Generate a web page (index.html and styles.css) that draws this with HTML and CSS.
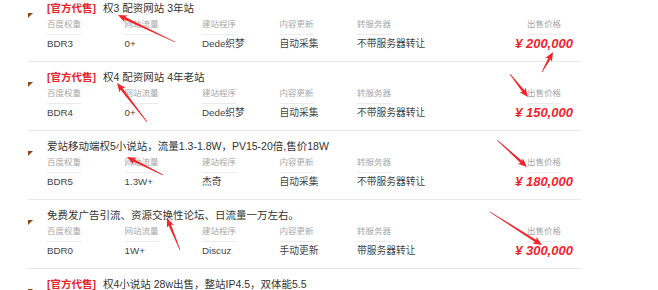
FILE: index.html
```html
<!DOCTYPE html>
<html lang="zh-CN">
<head>
<meta charset="utf-8">
<title>网站出售列表</title>
<link rel="stylesheet" href="styles.css">
</head>
<body>
<div class="page">
  <ul class="list">
    <li class="item">
      <div class="title"><span class="tag">[官方代售]</span>权3 配资网站 3年站</div>
      <div class="grid">
        <div class="cell"><span class="label">百度权重</span><span class="value">BDR3</span></div>
        <div class="cell"><span class="label">网站流量</span><span class="value">0+</span></div>
        <div class="cell"><span class="label">建站程序</span><span class="value">Dede织梦</span></div>
        <div class="cell"><span class="label">内容更新</span><span class="value">自动采集</span></div>
        <div class="cell"><span class="label">转服务器</span><span class="value">不带服务器转让</span></div>
        <div class="spacer"></div>
        <div class="cell price"><span class="label">出售价格</span><span class="money">¥ 200,000</span></div>
      </div>
    </li>
    <li class="item">
      <div class="title"><span class="tag">[官方代售]</span>权4 配资网站 4年老站</div>
      <div class="grid">
        <div class="cell"><span class="label">百度权重</span><span class="value">BDR4</span></div>
        <div class="cell"><span class="label">网站流量</span><span class="value">0+</span></div>
        <div class="cell"><span class="label">建站程序</span><span class="value">Dede织梦</span></div>
        <div class="cell"><span class="label">内容更新</span><span class="value">自动采集</span></div>
        <div class="cell"><span class="label">转服务器</span><span class="value">不带服务器转让</span></div>
        <div class="spacer"></div>
        <div class="cell price"><span class="label">出售价格</span><span class="money">¥ 150,000</span></div>
      </div>
    </li>
    <li class="item">
      <div class="title">爱站移动端权5小说站，流量1.3-1.8W，PV15-20倍,售价18W</div>
      <div class="grid">
        <div class="cell"><span class="label">百度权重</span><span class="value">BDR5</span></div>
        <div class="cell"><span class="label">网站流量</span><span class="value">1.3W+</span></div>
        <div class="cell"><span class="label">建站程序</span><span class="value">杰奇</span></div>
        <div class="cell"><span class="label">内容更新</span><span class="value">自动采集</span></div>
        <div class="cell"><span class="label">转服务器</span><span class="value">不带服务器转让</span></div>
        <div class="spacer"></div>
        <div class="cell price"><span class="label">出售价格</span><span class="money">¥ 180,000</span></div>
      </div>
    </li>
    <li class="item">
      <div class="title">免费发广告引流、资源交换性论坛、日流量一万左右。</div>
      <div class="grid">
        <div class="cell"><span class="label">百度权重</span><span class="value">BDR0</span></div>
        <div class="cell"><span class="label">网站流量</span><span class="value">1W+</span></div>
        <div class="cell"><span class="label">建站程序</span><span class="value">Discuz</span></div>
        <div class="cell"><span class="label">内容更新</span><span class="value">手动更新</span></div>
        <div class="cell"><span class="label">转服务器</span><span class="value">带服务器转让</span></div>
        <div class="spacer"></div>
        <div class="cell price"><span class="label">出售价格</span><span class="money">¥ 300,000</span></div>
      </div>
    </li>
    <li class="item">
      <div class="title"><span class="tag">[官方代售]</span>权4小说站 28w出售，整站IP4.5，双体能5.5</div>
      <div class="grid">
        <div class="cell"><span class="label">百度权重</span><span class="value">BDR4</span></div>
        <div class="cell"><span class="label">网站流量</span><span class="value">4.5W+</span></div>
        <div class="cell"><span class="label">建站程序</span><span class="value">杰奇</span></div>
        <div class="cell"><span class="label">内容更新</span><span class="value">自动采集</span></div>
        <div class="cell"><span class="label">转服务器</span><span class="value">不带服务器转让</span></div>
        <div class="spacer"></div>
        <div class="cell price"><span class="label">出售价格</span><span class="money">¥ 280,000</span></div>
      </div>
    </li>
  </ul>

  <svg class="annotations" width="658" height="290" viewBox="0 0 658 290" aria-hidden="true">
    <g fill="#f1262a">
      <polygon transform="translate(118 15) rotate(-154.65)" points="0,0 -9,-3.8 -7.5,-1.3 -63,-0.35 -63,0.35 -7.5,1.3 -9,3.8"/>
      <polygon transform="translate(553 52) rotate(-61.2)" points="0,0 -9,-3.8 -7.5,-1.3 -23,-0.35 -23,0.35 -7.5,1.3 -9,3.8"/>
      <polygon transform="translate(528 97) rotate(51.95)" points="0,0 -9,-3.8 -7.5,-1.3 -29,-0.35 -29,0.35 -7.5,1.3 -9,3.8"/>
      <polygon transform="translate(117 83) rotate(-127.57)" points="0,0 -9,-3.8 -7.5,-1.3 -49,-0.35 -49,0.35 -7.5,1.3 -9,3.8"/>
      <polygon transform="translate(127 157) rotate(-153.43)" points="0,0 -9,-3.8 -7.5,-1.3 -40,-0.35 -40,0.35 -7.5,1.3 -9,3.8"/>
      <polygon transform="translate(527 167) rotate(41.99)" points="0,0 -9,-3.8 -7.5,-1.3 -40,-0.35 -40,0.35 -7.5,1.3 -9,3.8"/>
      <polygon transform="translate(167 218) rotate(-112.11)" points="0,0 -9,-3.8 -7.5,-1.3 -34.5,-0.35 -34.5,0.35 -7.5,1.3 -9,3.8"/>
      <polygon transform="translate(542 245) rotate(32.4)" points="0,0 -9,-3.8 -7.5,-1.3 -61.6,-0.35 -61.6,0.35 -7.5,1.3 -9,3.8"/>
    </g>
  </svg>
</div>
</body>
</html>
```

FILE: styles.css
```css
html, body {
  margin: 0;
  padding: 0;
  background: #ffffff;
}

body {
  font-family: "Liberation Sans", "Noto Sans CJK SC", sans-serif;
  color: #333333;
  overflow: hidden;
}

.page {
  position: relative;
  width: 658px;
  height: 290px;
  overflow: hidden;
  padding-left: 28px;
  box-sizing: border-box;
}

.list {
  list-style: none;
  margin: -7px 0 0 0;
  padding: 0;
  width: 553px;
}

.item {
  position: relative;
  padding: 8px 0 10px 19px;
  border-bottom: 1px solid #e9e9e9;
}

.item::before {
  content: "";
  position: absolute;
  left: 0;
  top: 20px;
  width: 0;
  height: 0;
  border-top: 5px solid #8a4a18;
  border-right: 5px solid transparent;
}

.title {
  font-size: 10.5px;
  line-height: 14px;
  color: #333333;
  white-space: nowrap;
}

.tag {
  color: #e4262b;
  font-weight: bold;
  margin-right: 7px;
}

.grid {
  display: grid;
  grid-template-columns: repeat(5, 77.5px) 1fr 64px;
  margin-top: 3px;
  padding-right: 5px;
}

.cell {
  display: flex;
  flex-direction: column;
  align-items: flex-start;
}

.label {
  font-size: 8.5px;
  line-height: 12px;
  color: #a8a8a8;
  padding-bottom: 4px;
  border-bottom: 1px solid #ebebeb;
}

.value {
  margin-top: 2px;
  font-size: 9.75px;
  line-height: 14px;
  color: #444444;
  white-space: nowrap;
}

.price {
  align-items: center;
}

.money {
  margin-top: 2px;
  font-size: 13px;
  line-height: 14px;
  font-weight: bold;
  font-style: italic;
  color: #f0232b;
  white-space: nowrap;
}

.annotations {
  position: absolute;
  left: 0;
  top: 0;
  pointer-events: none;
}
```
